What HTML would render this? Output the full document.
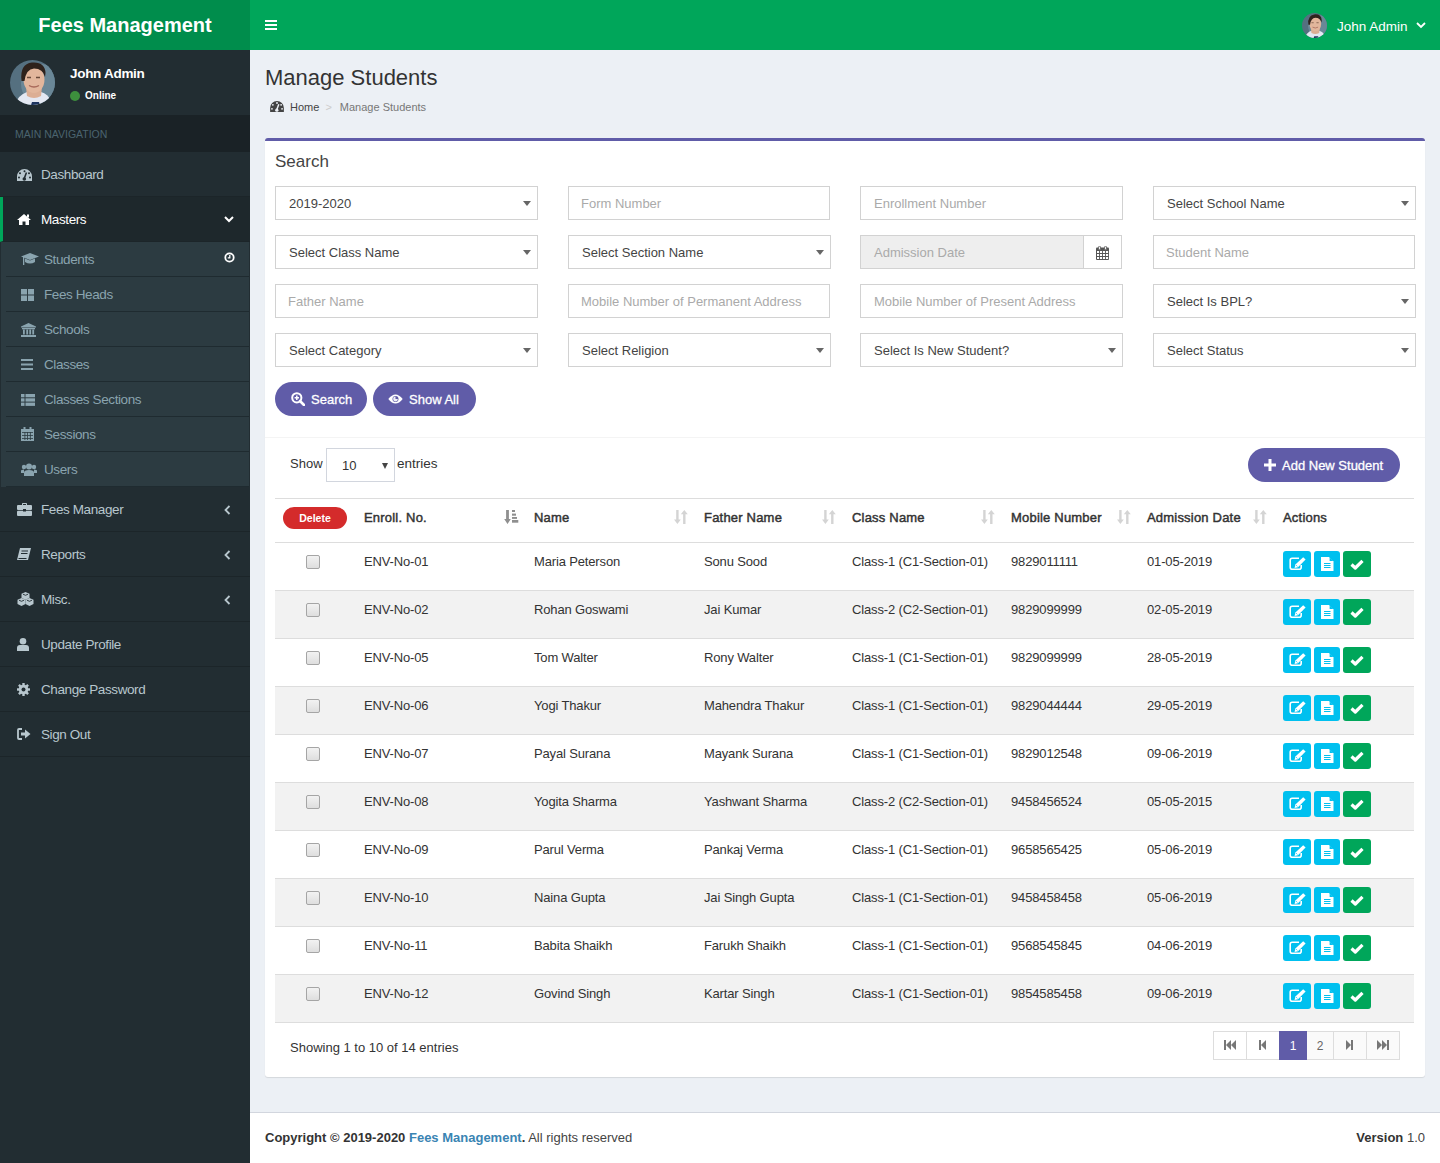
<!DOCTYPE html>
<html><head><meta charset="utf-8"><title>Manage Students</title>
<style>
*{box-sizing:border-box;margin:0;padding:0}
html,body{width:1440px;height:1163px;overflow:hidden}
body{font-family:"Liberation Sans",sans-serif;font-size:13px;color:#333;background:#ecf0f5;position:relative}
.abs{position:absolute}
/* header */
#logo{left:0;top:0;width:250px;height:50px;background:#008d4c;color:#fff;font-weight:bold;font-size:20px;line-height:50px;text-align:center}
#nav{left:250px;top:0;width:1190px;height:50px;background:#00a65a}
.hamb{left:15px;top:20px;width:12px;height:2px;background:#fff;box-shadow:0 4px 0 #fff,0 8px 0 #fff}
/* sidebar */
#side{left:0;top:50px;width:250px;height:1113px;background:#222d32}
.uname{left:70px;top:15px;color:#fff;font-weight:bold;font-size:13.5px;letter-spacing:-0.3px;line-height:18px}
.ustat{left:70px;top:39px;color:#fff;font-size:10px;font-weight:bold;line-height:14px}
.dot{display:inline-block;width:10px;height:10px;border-radius:50%;background:#3d8f3d;margin-right:5px;vertical-align:-2px}
#mh{left:0;top:65px;width:250px;height:37px;background:#1a2226;color:#4b646f;font-size:10.5px;line-height:39px;padding-left:15px}
.mi{position:absolute;left:0;width:250px;height:45px;border-bottom:1px solid #1c2529;color:#b8c7ce;font-size:13.5px;letter-spacing:-0.4px;line-height:46px;padding-left:41px}
.mi svg{position:absolute;left:17px;top:15px}
.mi .chev{position:absolute;left:224px;top:17px}
.mi.act{background:#1e282c;color:#fff;border-left:3px solid #00a65a;padding-left:38px}
.mi.act svg{left:14px}
#tv{left:1px;top:192px;width:248px;height:245px;background:#2c3b41}
.ti{position:absolute;left:0;width:248px;height:35px;color:#8aa4af;font-size:13.5px;letter-spacing:-0.4px;line-height:36px;padding-left:43px}
.ti:after{content:"";position:absolute;left:5px;right:0;bottom:0;height:1px;background:#1f2b30}
.ti svg{position:absolute;left:19px;top:11px}
/* content */
#title{left:265px;top:63px;font-size:22px;color:#333;line-height:30px}
#bc{left:270px;top:99px;font-size:11px;color:#444;line-height:16px}
#box{left:265px;top:138px;width:1160px;height:939px;background:#fff;border-top:3px solid #605ca8;border-radius:3px;box-shadow:0 1px 1px rgba(0,0,0,.1)}
.h3{left:10px;top:10px;font-size:17px;color:#444;line-height:22px}
.fc{position:absolute;height:34px;border:1px solid #d2d2d2;background:#fff;font-size:13px;line-height:34px;padding-left:13px;color:#aaa}
.fc.sel{color:#444}
.fc.sel:after{content:"";position:absolute;right:6px;top:14px;border-left:4px solid transparent;border-right:4px solid transparent;border-top:5px solid #666}
.btnp{position:absolute;height:34px;border-radius:17px;background:#605ca8;color:#fff;font-size:13px;line-height:35px;-webkit-text-stroke:0.3px #fff}
.th{font-size:13px;font-weight:normal;color:#333;letter-spacing:0.2px;line-height:17px;white-space:nowrap;-webkit-text-stroke:0.45px #333}
.td{font-size:13px;color:#333;letter-spacing:-0.15px;line-height:18px;white-space:nowrap}
.cb{width:14px;height:14px;border:1px solid #a5a5a5;border-radius:2px;background:linear-gradient(#f2f2f2,#dedede)}
.bi,.bs{position:absolute;height:26px;border-radius:3px;background:#00c0ef}
.bs{background:#00a65a}
.pgb{height:29px;border:1px solid #ddd;background:#fff;color:#666;font-size:12px;line-height:29px;text-align:center}
.pgb.act{background:#605ca8;border-color:#605ca8;color:#fff;z-index:2}
#foot{left:250px;top:1112px;width:1190px;height:51px;background:#fff;border-top:1px solid #d2d6de;font-size:13px;color:#444;line-height:50px;padding-left:15px}
#foot b{color:#333}
#foot a{color:#3a84b3;text-decoration:none;font-weight:bold}
.uavt{left:1052px;top:13px}
.nname{left:1087px;top:18px;color:#fff;font-size:13.5px;line-height:17px}
table{border-collapse:collapse}
</style></head><body>
<!-- HEADER -->
<div id="logo" class="abs">Fees Management</div>
<div id="nav" class="abs">
  <div class="abs hamb"></div>
  <svg class="abs uavt" width="25" height="25" viewBox="0 0 45 45">
    <defs><clipPath id="cav2"><circle cx="22.5" cy="22.5" r="22.5"/></clipPath></defs>
    <g clip-path="url(#cav2)">
      <rect width="45" height="45" fill="#557080"/>
      <circle cx="31" cy="24" r="20" fill="#6a8797"/>
      <path d="M5 45 Q8 35 17 32 H31 Q38 34 41 41 L40 45Z" fill="#e4e8f2"/>
      <path d="M16 27 H32 L31 36 Q24 40 17 36Z" fill="#dcae94"/>
      <ellipse cx="24" cy="19.5" rx="10.5" ry="13.5" fill="#e2b69c"/>
      <path d="M11.5 21 Q9.5 4 22 2.5 Q35 1.5 35.5 13 L35 17 Q33 8.5 24 8.5 Q16 9 14.5 21Z" fill="#2e221c"/>
      <path d="M17 17.5H21M26 17.5H30" stroke="#6a4a3a" stroke-width="1.3"/>
      <path d="M19 25.5 Q24 28.5 29 25.5" stroke="#a86a5a" stroke-width="1.4" fill="none"/>
      <path d="M22 42 H29 L30 45 H21Z" fill="#1e3560"/>
    </g>
  </svg>
  <div class="abs nname">John Admin</div>
  <svg class="abs" style="left:1166px;top:22px" width="10" height="7" viewBox="0 0 10 7"><path d="M1 1L5 5L9 1" stroke="#fff" stroke-width="1.8" fill="none"/></svg>
</div>
<!-- SIDEBAR -->
<div id="side" class="abs">
  <svg class="abs" style="left:10px;top:10px" width="45" height="45" viewBox="0 0 45 45">
    <defs><clipPath id="cav"><circle cx="22.5" cy="22.5" r="22.5"/></clipPath></defs>
    <g clip-path="url(#cav)">
      <rect width="45" height="45" fill="#557080"/>
      <circle cx="31" cy="24" r="20" fill="#6a8797"/>
      <path d="M5 45 Q8 35 17 32 H31 Q38 34 41 41 L40 45Z" fill="#e4e8f2"/>
      <path d="M16 27 H32 L31 36 Q24 40 17 36Z" fill="#dcae94"/>
      <ellipse cx="24" cy="19.5" rx="10.5" ry="13.5" fill="#e2b69c"/>
      <path d="M11.5 21 Q9.5 4 22 2.5 Q35 1.5 35.5 13 L35 17 Q33 8.5 24 8.5 Q16 9 14.5 21Z" fill="#2e221c"/>
      <path d="M17 17.5H21M26 17.5H30" stroke="#6a4a3a" stroke-width="1.3"/>
      <path d="M19 25.5 Q24 28.5 29 25.5" stroke="#a86a5a" stroke-width="1.4" fill="none"/>
      <path d="M22 42 H29 L30 45 H21Z" fill="#1e3560"/>
    </g>
  </svg>
  <div class="abs uname">John Admin</div>
  <div class="abs ustat"><span class="dot"></span>Online</div>
  <div id="mh" class="abs">MAIN NAVIGATION</div>

  <div class="mi" style="top:102px">
    <svg width="15" height="12" viewBox="0 0 15 12" style="top:17px"><path d="M7.5 0A7.5 7.5 0 0 0 0 7.5V12H15V7.5A7.5 7.5 0 0 0 7.5 0Z" fill="#b8c7ce"/><circle cx="7.5" cy="2.2" r="1" fill="#222d32"/><circle cx="3" cy="4.2" r="1" fill="#222d32"/><circle cx="12" cy="4.2" r="1" fill="#222d32"/><circle cx="2" cy="8.5" r="1" fill="#222d32"/><circle cx="13" cy="8.5" r="1" fill="#222d32"/><path d="M9.5 3.5L7.2 9.5" stroke="#222d32" stroke-width="1.6"/><circle cx="7.3" cy="10" r="1.8" fill="#222d32"/></svg>
    Dashboard</div>
  <div class="mi act" style="top:147px">
    <svg width="14" height="11" viewBox="0 0 14 11" style="top:17px"><path d="M7 0L0 6H2V11H5.5V7.5H8.5V11H12V6H14Z" fill="#fff"/><rect x="10" y="0.5" width="2" height="3" fill="#fff"/></svg>
    Masters
    <svg class="chev" width="10" height="7" viewBox="0 0 10 7" style="left:221px;top:19px"><path d="M1 1L5 5L9 1" stroke="#fff" stroke-width="2" fill="none"/></svg></div>

  <div id="tv" class="abs">
    <div class="ti" style="top:0">
      <svg width="18" height="13" viewBox="0 0 18 13" style="left:20px;top:11px"><path d="M9 0L0 3.5L9 7L18 3.5Z" fill="#8aa4af"/><path d="M4 5.5V9Q9 12 14 9V5.5L9 7.5Z" fill="#8aa4af"/><rect x="2" y="4" width="1.3" height="8" fill="#8aa4af"/></svg>
      Students
      <svg width="11" height="11" viewBox="0 0 11 11" style="left:223px;top:10px"><circle cx="5.5" cy="5.5" r="4.2" stroke="#fff" stroke-width="1.8" fill="none"/><path d="M5.8 3V5.8H3.8" stroke="#fff" stroke-width="1.3" fill="none"/></svg></div>
    <div class="ti" style="top:35px">
      <svg width="13" height="12" viewBox="0 0 13 12" style="left:20px;top:12px"><rect x="0" y="0" width="6" height="5.5" fill="#8aa4af"/><rect x="7" y="0" width="6" height="5.5" fill="#8aa4af"/><rect x="0" y="6.5" width="6" height="5.5" fill="#8aa4af"/><rect x="7" y="6.5" width="6" height="5.5" fill="#8aa4af"/></svg>
      Fees Heads</div>
    <div class="ti" style="top:70px">
      <svg width="15" height="14" viewBox="0 0 15 14" style="left:20px;top:11px"><path d="M7.5 0L0 3.5V4.5H15V3.5Z" fill="#8aa4af"/><rect x="1" y="5" width="13" height="1.3" fill="#8aa4af"/><rect x="2" y="6.5" width="1.8" height="5" fill="#8aa4af"/><rect x="5.3" y="6.5" width="1.8" height="5" fill="#8aa4af"/><rect x="8.3" y="6.5" width="1.8" height="5" fill="#8aa4af"/><rect x="11.3" y="6.5" width="1.8" height="5" fill="#8aa4af"/><rect x="0" y="12" width="15" height="2" fill="#8aa4af"/></svg>
      Schools</div>
    <div class="ti" style="top:105px">
      <svg width="12" height="11" viewBox="0 0 12 11" style="left:20px;top:12px"><rect y="0" width="12" height="2" fill="#8aa4af"/><rect y="4.5" width="12" height="2" fill="#8aa4af"/><rect y="9" width="12" height="2" fill="#8aa4af"/></svg>
      Classes</div>
    <div class="ti" style="top:140px">
      <svg width="14" height="12" viewBox="0 0 14 12" style="left:20px;top:12px"><rect x="0" y="0" width="3.5" height="3.3" fill="#8aa4af"/><rect x="4.5" y="0" width="9.5" height="3.3" fill="#8aa4af"/><rect x="0" y="4.3" width="3.5" height="3.3" fill="#8aa4af"/><rect x="4.5" y="4.3" width="9.5" height="3.3" fill="#8aa4af"/><rect x="0" y="8.6" width="3.5" height="3.3" fill="#8aa4af"/><rect x="4.5" y="8.6" width="9.5" height="3.3" fill="#8aa4af"/></svg>
      Classes Sections</div>
    <div class="ti" style="top:175px">
      <svg width="13" height="14" viewBox="0 0 13 14" style="left:20px;top:10px"><rect x="0" y="2" width="13" height="12" fill="#8aa4af"/><rect x="2.5" y="0" width="2" height="4" fill="#8aa4af"/><rect x="8.5" y="0" width="2" height="4" fill="#8aa4af"/><g fill="#2c3b41"><rect x="1" y="5" width="11" height="0.8"/><rect x="1" y="8" width="11" height="0.8"/><rect x="1" y="11" width="11" height="0.8"/><rect x="3.5" y="5" width="0.8" height="8"/><rect x="6.2" y="5" width="0.8" height="8"/><rect x="8.9" y="5" width="0.8" height="8"/></g></svg>
      Sessions</div>
    <div class="ti" style="top:210px">
      <svg width="16" height="13" viewBox="0 0 16 13" style="left:20px;top:11px"><circle cx="8" cy="3.5" r="3" fill="#8aa4af"/><circle cx="3" cy="4" r="2.2" fill="#8aa4af"/><circle cx="13" cy="4" r="2.2" fill="#8aa4af"/><path d="M3 13V9.5Q3 7 8 7Q13 7 13 9.5V13Z" fill="#8aa4af"/><path d="M0 10V8Q0 6.5 3 6.5V10Z" fill="#8aa4af"/><path d="M16 10V8Q16 6.5 13 6.5V10Z" fill="#8aa4af"/></svg>
      Users</div>
  </div>

  <div class="mi" style="top:437px">
    <svg width="15" height="13" viewBox="0 0 15 13" style="top:16px"><path d="M5 2V0.8Q5 0 5.8 0H9.2Q10 0 10 0.8V2H9V1H6V2Z" fill="#b8c7ce"/><rect x="0" y="2" width="15" height="5" rx="1" fill="#b8c7ce"/><rect x="0" y="7.8" width="15" height="5.2" rx="1" fill="#b8c7ce"/><rect x="6" y="6" width="3" height="2.5" fill="#222d32"/></svg>
    Fees Manager
    <svg class="chev" width="7" height="10" viewBox="0 0 7 10" style="left:224px;top:18px"><path d="M5.5 1L1.5 5L5.5 9" stroke="#b8c7ce" stroke-width="1.8" fill="none"/></svg></div>
  <div class="mi" style="top:482px">
    <svg width="14" height="13" viewBox="0 0 14 13" style="top:16px"><path d="M3 0H14L11 12H0Z" fill="#b8c7ce"/><g stroke="#222d32" stroke-width="1"><path d="M4.5 3H11"/><path d="M4 5.5H10.5"/><path d="M1.5 10.5H9.5"/></g></svg>
    Reports
    <svg class="chev" width="7" height="10" viewBox="0 0 7 10" style="left:224px;top:18px"><path d="M5.5 1L1.5 5L5.5 9" stroke="#b8c7ce" stroke-width="1.8" fill="none"/></svg></div>
  <div class="mi" style="top:527px">
    <svg width="17" height="14" viewBox="0 0 17 14" style="top:15px"><path d="M8.5 0L12.5 1.8V6L8.5 7.8L4.5 6V1.8Z" fill="#b8c7ce"/><path d="M4.5 6L8.5 7.8V12L4.5 14L0.5 12V7.8Z" fill="#b8c7ce"/><path d="M12.5 6L16.5 7.8V12L12.5 14L8.5 12V7.8Z" fill="#b8c7ce"/><path d="M6 2.2L8.5 3.3L11 2.2M2 8.2L4.5 9.3L7 8.2M10 8.2L12.5 9.3L15 8.2" stroke="#222d32" stroke-width="0.9" fill="none"/></svg>
    Misc.
    <svg class="chev" width="7" height="10" viewBox="0 0 7 10" style="left:224px;top:18px"><path d="M5.5 1L1.5 5L5.5 9" stroke="#b8c7ce" stroke-width="1.8" fill="none"/></svg></div>
  <div class="mi" style="top:572px">
    <svg width="12" height="13" viewBox="0 0 12 13" style="top:16px"><circle cx="6" cy="3.3" r="3.3" fill="#b8c7ce"/><path d="M0 13V10Q0 7 3 7H9Q12 7 12 10V13Z" fill="#b8c7ce"/></svg>
    Update Profile</div>
  <div class="mi" style="top:617px">
    <svg width="13" height="13" viewBox="0 0 13 13" style="top:16px"><g fill="#b8c7ce"><circle cx="6.5" cy="6.5" r="4.8"/><rect x="5.3" y="0" width="2.4" height="13"/><rect x="0" y="5.3" width="13" height="2.4"/><rect x="5.3" y="0" width="2.4" height="13" transform="rotate(45 6.5 6.5)"/><rect x="5.3" y="0" width="2.4" height="13" transform="rotate(-45 6.5 6.5)"/></g><circle cx="6.5" cy="6.5" r="2" fill="#222d32"/></svg>
    Change Password</div>
  <div class="mi" style="top:662px">
    <svg width="14" height="12" viewBox="0 0 14 12" style="top:16px"><path d="M5 1H2Q1 1 1 2V10Q1 11 2 11H5" stroke="#b8c7ce" stroke-width="1.8" fill="none"/><path d="M4 4.5H8V1.5L13.5 6L8 10.5V7.5H4Z" fill="#b8c7ce"/></svg>
    Sign Out</div>
</div>

<!-- CONTENT -->
<div id="title" class="abs">Manage Students</div>
<div id="bc" class="abs">
  <svg width="14" height="11" viewBox="0 0 15 12" style="vertical-align:-1px"><path d="M7.5 0A7.5 7.5 0 0 0 0 7.5V12H15V7.5A7.5 7.5 0 0 0 7.5 0Z" fill="#444"/><circle cx="7.5" cy="2.2" r="1" fill="#ecf0f5"/><circle cx="3" cy="4.2" r="1" fill="#ecf0f5"/><circle cx="12" cy="4.2" r="1" fill="#ecf0f5"/><circle cx="2" cy="8.5" r="1" fill="#ecf0f5"/><circle cx="13" cy="8.5" r="1" fill="#ecf0f5"/><path d="M9.5 3.5L7.2 9.5" stroke="#ecf0f5" stroke-width="1.6"/><circle cx="7.3" cy="10" r="1.8" fill="#ecf0f5"/></svg>
  <span style="margin-left:3px">Home</span><span style="color:#ccc;margin:0 8px 0 6px">&gt;</span><span style="color:#777">Manage Students</span>
</div>
<div id="box" class="abs">
  <div class="abs h3">Search</div>
  <!-- row 1 : y abs 186 -> rel 45 -->
  <div class="fc sel" style="left:10px;top:45px;width:263px">2019-2020</div>
  <div class="fc" style="left:303px;top:45px;width:262px;padding-left:12px">Form Number</div>
  <div class="fc" style="left:595px;top:45px;width:263px">Enrollment Number</div>
  <div class="fc sel" style="left:888px;top:45px;width:263px">Select School Name</div>
  <!-- row 2 -->
  <div class="fc sel" style="left:10px;top:94px;width:263px">Select Class Name</div>
  <div class="fc sel" style="left:303px;top:94px;width:263px">Select Section Name</div>
  <div class="fc" style="left:595px;top:94px;width:224px;background:#eee">Admission Date</div>
  <div class="fc" style="left:818px;top:94px;width:39px;padding:0">
    <svg width="13" height="14" viewBox="0 0 13 14" style="position:absolute;left:12px;top:10px"><rect x="0" y="1.5" width="13" height="12.5" rx="1" fill="#555"/><g fill="#fff"><rect x="1" y="5" width="2.1" height="2"/><rect x="4" y="5" width="2.1" height="2"/><rect x="7" y="5" width="2.1" height="2"/><rect x="10" y="5" width="2.1" height="2"/><rect x="1" y="8" width="2.1" height="2"/><rect x="4" y="8" width="2.1" height="2"/><rect x="7" y="8" width="2.1" height="2"/><rect x="10" y="8" width="2.1" height="2"/><rect x="1" y="11" width="2.1" height="2"/><rect x="4" y="11" width="2.1" height="2"/><rect x="7" y="11" width="2.1" height="2"/><rect x="10" y="11" width="2.1" height="2"/></g><rect x="2.6" y="0.2" width="1.9" height="3.6" rx="0.9" fill="#fff" stroke="#555" stroke-width="0.8"/><rect x="8.6" y="0.2" width="1.9" height="3.6" rx="0.9" fill="#fff" stroke="#555" stroke-width="0.8"/></svg>
  </div>
  <div class="fc" style="left:888px;top:94px;width:262px;padding-left:12px">Student Name</div>
  <!-- row 3 -->
  <div class="fc" style="left:10px;top:143px;width:263px;padding-left:12px">Father Name</div>
  <div class="fc" style="left:303px;top:143px;width:262px;padding-left:12px">Mobile Number of Permanent Address</div>
  <div class="fc" style="left:595px;top:143px;width:263px">Mobile Number of Present Address</div>
  <div class="fc sel" style="left:888px;top:143px;width:263px">Select Is BPL?</div>
  <!-- row 4 -->
  <div class="fc sel" style="left:10px;top:192px;width:263px">Select Category</div>
  <div class="fc sel" style="left:303px;top:192px;width:263px">Select Religion</div>
  <div class="fc sel" style="left:595px;top:192px;width:263px">Select Is New Student?</div>
  <div class="fc sel" style="left:888px;top:192px;width:263px">Select Status</div>
  <!-- buttons -->
  <div class="btnp" style="left:10px;top:241px;width:92px;padding-left:36px">
    <svg width="14" height="14" viewBox="0 0 14 14" style="position:absolute;left:16px;top:10px"><circle cx="5.8" cy="5.8" r="4.6" stroke="#fff" stroke-width="2" fill="none"/><path d="M9 9L13 13" stroke="#fff" stroke-width="2.6" stroke-linecap="round"/><path d="M5.8 3.6V8M3.6 5.8H8" stroke="#fff" stroke-width="1.5"/></svg>Search</div>
  <div class="btnp" style="left:108px;top:241px;width:103px;padding-left:36px">
    <svg width="15" height="10" viewBox="0 0 15 10" style="position:absolute;left:15px;top:12px"><path d="M0.3 5Q7.5 -4 14.7 5Q7.5 14 0.3 5Z" fill="#fff"/><circle cx="7.5" cy="5" r="3" fill="#605ca8"/><path d="M7.5 2.6A2.4 2.4 0 1 0 9.9 5H7.5Z" fill="#fff" opacity="0.9"/></svg>Show All</div>

  <!-- separator -->
  <div class="abs" style="left:0;top:296px;width:1160px;height:1px;background:#f4f4f4"></div>

  <!-- datatable top -->
  <div class="abs" style="left:25px;top:315px;font-size:13px;color:#333;line-height:16px">Show</div>
  <div class="abs" style="left:61px;top:307px;width:69px;height:34px;border:1px solid #d2d6de;font-size:13px;line-height:34px;padding-left:15px;color:#333">10
    <div class="abs" style="left:55px;top:14px;border-left:3.5px solid transparent;border-right:3.5px solid transparent;border-top:6px solid #444"></div></div>
  <div class="abs" style="left:132px;top:315px;font-size:13.5px;color:#333;line-height:16px">entries</div>
  <div class="btnp" style="left:983px;top:307px;width:152px;padding-left:34px">
    <svg width="12" height="12" viewBox="0 0 12 12" style="position:absolute;left:16px;top:11px"><path d="M4.5 0H7.5V4.5H12V7.5H7.5V12H4.5V7.5H0V4.5H4.5Z" fill="#fff"/></svg>Add New Student</div>
<!--TABLE-->
<div class="abs" style="left:10px;top:357px;width:1139px;height:1px;background:#ddd"></div>
<div class="abs" style="left:18px;top:366px;width:64px;height:22px;border-radius:11px;background:#d42b2b;color:#fff;font-size:10.5px;font-weight:bold;line-height:23px;text-align:center">Delete</div>
<div class="abs th" style="left:99px;top:368px">Enroll. No.</div>
<div class="abs" style="left:239px;top:369px;width:15px;height:14px;line-height:0"><svg width="15" height="14" viewBox="0 0 15 14"><path d="M2.1 0H4.9V9H6.8L3.5 14L0.2 9H2.1Z" fill="#8f8f8f"/><rect x="8" y="0" width="3" height="2" fill="#8f8f8f"/><rect x="8" y="3.6" width="4" height="2.1" fill="#8f8f8f"/><rect x="8" y="7" width="5" height="1.9" fill="#8f8f8f"/><rect x="8" y="10" width="6.3" height="2.7" fill="#8f8f8f"/></svg></div>
<div class="abs th" style="left:269px;top:368px">Name</div>
<div class="abs" style="left:409px;top:369px;width:15px;height:14px;line-height:0"><svg width="15" height="14" viewBox="0 0 15 14"><path d="M2.2 0H4.6V9.5H6.8L3.4 14L0 9.5H2.2Z" fill="#d4d4d4"/><path d="M9.1 14H11.5V4.2H13.8L10.3 0L6.8 4.2H9.1Z" fill="#d4d4d4"/></svg></div>
<div class="abs th" style="left:439px;top:368px">Father Name</div>
<div class="abs" style="left:557px;top:369px;width:15px;height:14px;line-height:0"><svg width="15" height="14" viewBox="0 0 15 14"><path d="M2.2 0H4.6V9.5H6.8L3.4 14L0 9.5H2.2Z" fill="#d4d4d4"/><path d="M9.1 14H11.5V4.2H13.8L10.3 0L6.8 4.2H9.1Z" fill="#d4d4d4"/></svg></div>
<div class="abs th" style="left:587px;top:368px">Class Name</div>
<div class="abs" style="left:716px;top:369px;width:15px;height:14px;line-height:0"><svg width="15" height="14" viewBox="0 0 15 14"><path d="M2.2 0H4.6V9.5H6.8L3.4 14L0 9.5H2.2Z" fill="#d4d4d4"/><path d="M9.1 14H11.5V4.2H13.8L10.3 0L6.8 4.2H9.1Z" fill="#d4d4d4"/></svg></div>
<div class="abs th" style="left:746px;top:368px">Mobile Number</div>
<div class="abs" style="left:852px;top:369px;width:15px;height:14px;line-height:0"><svg width="15" height="14" viewBox="0 0 15 14"><path d="M2.2 0H4.6V9.5H6.8L3.4 14L0 9.5H2.2Z" fill="#d4d4d4"/><path d="M9.1 14H11.5V4.2H13.8L10.3 0L6.8 4.2H9.1Z" fill="#d4d4d4"/></svg></div>
<div class="abs th" style="left:882px;top:368px">Admission Date</div>
<div class="abs" style="left:988px;top:369px;width:15px;height:14px;line-height:0"><svg width="15" height="14" viewBox="0 0 15 14"><path d="M2.2 0H4.6V9.5H6.8L3.4 14L0 9.5H2.2Z" fill="#d4d4d4"/><path d="M9.1 14H11.5V4.2H13.8L10.3 0L6.8 4.2H9.1Z" fill="#d4d4d4"/></svg></div>
<div class="abs th" style="left:1018px;top:368px">Actions</div>
<div class="abs" style="left:10px;top:401px;width:1139px;height:1px;background:#ddd"></div>
<div class="abs" style="left:10px;top:402px;width:1139px;height:47px;background:#fff"></div>
<div class="abs" style="left:10px;top:449px;width:1139px;height:1px;background:#ddd"></div>
<div class="abs cb" style="left:41px;top:414px"></div>
<div class="abs td" style="left:99px;top:412px">ENV-No-01</div>
<div class="abs td" style="left:269px;top:412px">Maria Peterson</div>
<div class="abs td" style="left:439px;top:412px">Sonu Sood</div>
<div class="abs td" style="left:587px;top:412px">Class-1 (C1-Section-01)</div>
<div class="abs td" style="left:746px;top:412px">9829011111</div>
<div class="abs td" style="left:882px;top:412px">01-05-2019</div>
<div class="abs bi" style="left:1018px;top:410px;width:28px"><svg width="17" height="14" viewBox="0 0 17 14" style="position:absolute;left:6px;top:6px"><path d="M10 1.2H3.2Q1.2 1.2 1.2 3.2V10.3Q1.2 12.3 3.2 12.3H10.2Q12.2 12.3 12.2 10.3V8" stroke="#fff" stroke-width="1.6" fill="none"/><path d="M14.2 0.2L16.6 2.6L9 10.2L5.6 11L6.4 7.6Z" fill="#fff"/><path d="M7.2 8.2L8.4 9.4" stroke="#00c0ef" stroke-width="0.8"/></svg></div>
<div class="abs bi" style="left:1049px;top:410px;width:26px"><svg width="13" height="14" viewBox="0 0 13 14" style="position:absolute;left:7px;top:6px"><path d="M0 0H8L12.5 4.5V14H0Z" fill="#fff"/><path d="M8.6 0.2V4H12.3Z" fill="#00c0ef"/><rect x="3" y="6" width="6.5" height="1" fill="#00c0ef"/><rect x="3" y="8" width="6.5" height="1" fill="#00c0ef"/><rect x="3" y="10" width="6.5" height="1" fill="#00c0ef"/></svg></div>
<div class="abs bs" style="left:1078px;top:410px;width:28px"><svg width="14" height="11" viewBox="0 0 14 11" style="position:absolute;left:7px;top:8px"><path d="M1.5 5.5L5.3 9L12.5 1.8" stroke="#fff" stroke-width="3.2" fill="none" stroke-linejoin="round"/></svg></div>
<div class="abs" style="left:10px;top:450px;width:1139px;height:47px;background:#f2f2f2"></div>
<div class="abs" style="left:10px;top:497px;width:1139px;height:1px;background:#ddd"></div>
<div class="abs cb" style="left:41px;top:462px"></div>
<div class="abs td" style="left:99px;top:460px">ENV-No-02</div>
<div class="abs td" style="left:269px;top:460px">Rohan Goswami</div>
<div class="abs td" style="left:439px;top:460px">Jai Kumar</div>
<div class="abs td" style="left:587px;top:460px">Class-2 (C2-Section-01)</div>
<div class="abs td" style="left:746px;top:460px">9829099999</div>
<div class="abs td" style="left:882px;top:460px">02-05-2019</div>
<div class="abs bi" style="left:1018px;top:458px;width:28px"><svg width="17" height="14" viewBox="0 0 17 14" style="position:absolute;left:6px;top:6px"><path d="M10 1.2H3.2Q1.2 1.2 1.2 3.2V10.3Q1.2 12.3 3.2 12.3H10.2Q12.2 12.3 12.2 10.3V8" stroke="#fff" stroke-width="1.6" fill="none"/><path d="M14.2 0.2L16.6 2.6L9 10.2L5.6 11L6.4 7.6Z" fill="#fff"/><path d="M7.2 8.2L8.4 9.4" stroke="#00c0ef" stroke-width="0.8"/></svg></div>
<div class="abs bi" style="left:1049px;top:458px;width:26px"><svg width="13" height="14" viewBox="0 0 13 14" style="position:absolute;left:7px;top:6px"><path d="M0 0H8L12.5 4.5V14H0Z" fill="#fff"/><path d="M8.6 0.2V4H12.3Z" fill="#00c0ef"/><rect x="3" y="6" width="6.5" height="1" fill="#00c0ef"/><rect x="3" y="8" width="6.5" height="1" fill="#00c0ef"/><rect x="3" y="10" width="6.5" height="1" fill="#00c0ef"/></svg></div>
<div class="abs bs" style="left:1078px;top:458px;width:28px"><svg width="14" height="11" viewBox="0 0 14 11" style="position:absolute;left:7px;top:8px"><path d="M1.5 5.5L5.3 9L12.5 1.8" stroke="#fff" stroke-width="3.2" fill="none" stroke-linejoin="round"/></svg></div>
<div class="abs" style="left:10px;top:498px;width:1139px;height:47px;background:#fff"></div>
<div class="abs" style="left:10px;top:545px;width:1139px;height:1px;background:#ddd"></div>
<div class="abs cb" style="left:41px;top:510px"></div>
<div class="abs td" style="left:99px;top:508px">ENV-No-05</div>
<div class="abs td" style="left:269px;top:508px">Tom Walter</div>
<div class="abs td" style="left:439px;top:508px">Rony Walter</div>
<div class="abs td" style="left:587px;top:508px">Class-1 (C1-Section-01)</div>
<div class="abs td" style="left:746px;top:508px">9829099999</div>
<div class="abs td" style="left:882px;top:508px">28-05-2019</div>
<div class="abs bi" style="left:1018px;top:506px;width:28px"><svg width="17" height="14" viewBox="0 0 17 14" style="position:absolute;left:6px;top:6px"><path d="M10 1.2H3.2Q1.2 1.2 1.2 3.2V10.3Q1.2 12.3 3.2 12.3H10.2Q12.2 12.3 12.2 10.3V8" stroke="#fff" stroke-width="1.6" fill="none"/><path d="M14.2 0.2L16.6 2.6L9 10.2L5.6 11L6.4 7.6Z" fill="#fff"/><path d="M7.2 8.2L8.4 9.4" stroke="#00c0ef" stroke-width="0.8"/></svg></div>
<div class="abs bi" style="left:1049px;top:506px;width:26px"><svg width="13" height="14" viewBox="0 0 13 14" style="position:absolute;left:7px;top:6px"><path d="M0 0H8L12.5 4.5V14H0Z" fill="#fff"/><path d="M8.6 0.2V4H12.3Z" fill="#00c0ef"/><rect x="3" y="6" width="6.5" height="1" fill="#00c0ef"/><rect x="3" y="8" width="6.5" height="1" fill="#00c0ef"/><rect x="3" y="10" width="6.5" height="1" fill="#00c0ef"/></svg></div>
<div class="abs bs" style="left:1078px;top:506px;width:28px"><svg width="14" height="11" viewBox="0 0 14 11" style="position:absolute;left:7px;top:8px"><path d="M1.5 5.5L5.3 9L12.5 1.8" stroke="#fff" stroke-width="3.2" fill="none" stroke-linejoin="round"/></svg></div>
<div class="abs" style="left:10px;top:546px;width:1139px;height:47px;background:#f2f2f2"></div>
<div class="abs" style="left:10px;top:593px;width:1139px;height:1px;background:#ddd"></div>
<div class="abs cb" style="left:41px;top:558px"></div>
<div class="abs td" style="left:99px;top:556px">ENV-No-06</div>
<div class="abs td" style="left:269px;top:556px">Yogi Thakur</div>
<div class="abs td" style="left:439px;top:556px">Mahendra Thakur</div>
<div class="abs td" style="left:587px;top:556px">Class-1 (C1-Section-01)</div>
<div class="abs td" style="left:746px;top:556px">9829044444</div>
<div class="abs td" style="left:882px;top:556px">29-05-2019</div>
<div class="abs bi" style="left:1018px;top:554px;width:28px"><svg width="17" height="14" viewBox="0 0 17 14" style="position:absolute;left:6px;top:6px"><path d="M10 1.2H3.2Q1.2 1.2 1.2 3.2V10.3Q1.2 12.3 3.2 12.3H10.2Q12.2 12.3 12.2 10.3V8" stroke="#fff" stroke-width="1.6" fill="none"/><path d="M14.2 0.2L16.6 2.6L9 10.2L5.6 11L6.4 7.6Z" fill="#fff"/><path d="M7.2 8.2L8.4 9.4" stroke="#00c0ef" stroke-width="0.8"/></svg></div>
<div class="abs bi" style="left:1049px;top:554px;width:26px"><svg width="13" height="14" viewBox="0 0 13 14" style="position:absolute;left:7px;top:6px"><path d="M0 0H8L12.5 4.5V14H0Z" fill="#fff"/><path d="M8.6 0.2V4H12.3Z" fill="#00c0ef"/><rect x="3" y="6" width="6.5" height="1" fill="#00c0ef"/><rect x="3" y="8" width="6.5" height="1" fill="#00c0ef"/><rect x="3" y="10" width="6.5" height="1" fill="#00c0ef"/></svg></div>
<div class="abs bs" style="left:1078px;top:554px;width:28px"><svg width="14" height="11" viewBox="0 0 14 11" style="position:absolute;left:7px;top:8px"><path d="M1.5 5.5L5.3 9L12.5 1.8" stroke="#fff" stroke-width="3.2" fill="none" stroke-linejoin="round"/></svg></div>
<div class="abs" style="left:10px;top:594px;width:1139px;height:47px;background:#fff"></div>
<div class="abs" style="left:10px;top:641px;width:1139px;height:1px;background:#ddd"></div>
<div class="abs cb" style="left:41px;top:606px"></div>
<div class="abs td" style="left:99px;top:604px">ENV-No-07</div>
<div class="abs td" style="left:269px;top:604px">Payal Surana</div>
<div class="abs td" style="left:439px;top:604px">Mayank Surana</div>
<div class="abs td" style="left:587px;top:604px">Class-1 (C1-Section-01)</div>
<div class="abs td" style="left:746px;top:604px">9829012548</div>
<div class="abs td" style="left:882px;top:604px">09-06-2019</div>
<div class="abs bi" style="left:1018px;top:602px;width:28px"><svg width="17" height="14" viewBox="0 0 17 14" style="position:absolute;left:6px;top:6px"><path d="M10 1.2H3.2Q1.2 1.2 1.2 3.2V10.3Q1.2 12.3 3.2 12.3H10.2Q12.2 12.3 12.2 10.3V8" stroke="#fff" stroke-width="1.6" fill="none"/><path d="M14.2 0.2L16.6 2.6L9 10.2L5.6 11L6.4 7.6Z" fill="#fff"/><path d="M7.2 8.2L8.4 9.4" stroke="#00c0ef" stroke-width="0.8"/></svg></div>
<div class="abs bi" style="left:1049px;top:602px;width:26px"><svg width="13" height="14" viewBox="0 0 13 14" style="position:absolute;left:7px;top:6px"><path d="M0 0H8L12.5 4.5V14H0Z" fill="#fff"/><path d="M8.6 0.2V4H12.3Z" fill="#00c0ef"/><rect x="3" y="6" width="6.5" height="1" fill="#00c0ef"/><rect x="3" y="8" width="6.5" height="1" fill="#00c0ef"/><rect x="3" y="10" width="6.5" height="1" fill="#00c0ef"/></svg></div>
<div class="abs bs" style="left:1078px;top:602px;width:28px"><svg width="14" height="11" viewBox="0 0 14 11" style="position:absolute;left:7px;top:8px"><path d="M1.5 5.5L5.3 9L12.5 1.8" stroke="#fff" stroke-width="3.2" fill="none" stroke-linejoin="round"/></svg></div>
<div class="abs" style="left:10px;top:642px;width:1139px;height:47px;background:#f2f2f2"></div>
<div class="abs" style="left:10px;top:689px;width:1139px;height:1px;background:#ddd"></div>
<div class="abs cb" style="left:41px;top:654px"></div>
<div class="abs td" style="left:99px;top:652px">ENV-No-08</div>
<div class="abs td" style="left:269px;top:652px">Yogita Sharma</div>
<div class="abs td" style="left:439px;top:652px">Yashwant Sharma</div>
<div class="abs td" style="left:587px;top:652px">Class-2 (C2-Section-01)</div>
<div class="abs td" style="left:746px;top:652px">9458456524</div>
<div class="abs td" style="left:882px;top:652px">05-05-2015</div>
<div class="abs bi" style="left:1018px;top:650px;width:28px"><svg width="17" height="14" viewBox="0 0 17 14" style="position:absolute;left:6px;top:6px"><path d="M10 1.2H3.2Q1.2 1.2 1.2 3.2V10.3Q1.2 12.3 3.2 12.3H10.2Q12.2 12.3 12.2 10.3V8" stroke="#fff" stroke-width="1.6" fill="none"/><path d="M14.2 0.2L16.6 2.6L9 10.2L5.6 11L6.4 7.6Z" fill="#fff"/><path d="M7.2 8.2L8.4 9.4" stroke="#00c0ef" stroke-width="0.8"/></svg></div>
<div class="abs bi" style="left:1049px;top:650px;width:26px"><svg width="13" height="14" viewBox="0 0 13 14" style="position:absolute;left:7px;top:6px"><path d="M0 0H8L12.5 4.5V14H0Z" fill="#fff"/><path d="M8.6 0.2V4H12.3Z" fill="#00c0ef"/><rect x="3" y="6" width="6.5" height="1" fill="#00c0ef"/><rect x="3" y="8" width="6.5" height="1" fill="#00c0ef"/><rect x="3" y="10" width="6.5" height="1" fill="#00c0ef"/></svg></div>
<div class="abs bs" style="left:1078px;top:650px;width:28px"><svg width="14" height="11" viewBox="0 0 14 11" style="position:absolute;left:7px;top:8px"><path d="M1.5 5.5L5.3 9L12.5 1.8" stroke="#fff" stroke-width="3.2" fill="none" stroke-linejoin="round"/></svg></div>
<div class="abs" style="left:10px;top:690px;width:1139px;height:47px;background:#fff"></div>
<div class="abs" style="left:10px;top:737px;width:1139px;height:1px;background:#ddd"></div>
<div class="abs cb" style="left:41px;top:702px"></div>
<div class="abs td" style="left:99px;top:700px">ENV-No-09</div>
<div class="abs td" style="left:269px;top:700px">Parul Verma</div>
<div class="abs td" style="left:439px;top:700px">Pankaj Verma</div>
<div class="abs td" style="left:587px;top:700px">Class-1 (C1-Section-01)</div>
<div class="abs td" style="left:746px;top:700px">9658565425</div>
<div class="abs td" style="left:882px;top:700px">05-06-2019</div>
<div class="abs bi" style="left:1018px;top:698px;width:28px"><svg width="17" height="14" viewBox="0 0 17 14" style="position:absolute;left:6px;top:6px"><path d="M10 1.2H3.2Q1.2 1.2 1.2 3.2V10.3Q1.2 12.3 3.2 12.3H10.2Q12.2 12.3 12.2 10.3V8" stroke="#fff" stroke-width="1.6" fill="none"/><path d="M14.2 0.2L16.6 2.6L9 10.2L5.6 11L6.4 7.6Z" fill="#fff"/><path d="M7.2 8.2L8.4 9.4" stroke="#00c0ef" stroke-width="0.8"/></svg></div>
<div class="abs bi" style="left:1049px;top:698px;width:26px"><svg width="13" height="14" viewBox="0 0 13 14" style="position:absolute;left:7px;top:6px"><path d="M0 0H8L12.5 4.5V14H0Z" fill="#fff"/><path d="M8.6 0.2V4H12.3Z" fill="#00c0ef"/><rect x="3" y="6" width="6.5" height="1" fill="#00c0ef"/><rect x="3" y="8" width="6.5" height="1" fill="#00c0ef"/><rect x="3" y="10" width="6.5" height="1" fill="#00c0ef"/></svg></div>
<div class="abs bs" style="left:1078px;top:698px;width:28px"><svg width="14" height="11" viewBox="0 0 14 11" style="position:absolute;left:7px;top:8px"><path d="M1.5 5.5L5.3 9L12.5 1.8" stroke="#fff" stroke-width="3.2" fill="none" stroke-linejoin="round"/></svg></div>
<div class="abs" style="left:10px;top:738px;width:1139px;height:47px;background:#f2f2f2"></div>
<div class="abs" style="left:10px;top:785px;width:1139px;height:1px;background:#ddd"></div>
<div class="abs cb" style="left:41px;top:750px"></div>
<div class="abs td" style="left:99px;top:748px">ENV-No-10</div>
<div class="abs td" style="left:269px;top:748px">Naina Gupta</div>
<div class="abs td" style="left:439px;top:748px">Jai Singh Gupta</div>
<div class="abs td" style="left:587px;top:748px">Class-1 (C1-Section-01)</div>
<div class="abs td" style="left:746px;top:748px">9458458458</div>
<div class="abs td" style="left:882px;top:748px">05-06-2019</div>
<div class="abs bi" style="left:1018px;top:746px;width:28px"><svg width="17" height="14" viewBox="0 0 17 14" style="position:absolute;left:6px;top:6px"><path d="M10 1.2H3.2Q1.2 1.2 1.2 3.2V10.3Q1.2 12.3 3.2 12.3H10.2Q12.2 12.3 12.2 10.3V8" stroke="#fff" stroke-width="1.6" fill="none"/><path d="M14.2 0.2L16.6 2.6L9 10.2L5.6 11L6.4 7.6Z" fill="#fff"/><path d="M7.2 8.2L8.4 9.4" stroke="#00c0ef" stroke-width="0.8"/></svg></div>
<div class="abs bi" style="left:1049px;top:746px;width:26px"><svg width="13" height="14" viewBox="0 0 13 14" style="position:absolute;left:7px;top:6px"><path d="M0 0H8L12.5 4.5V14H0Z" fill="#fff"/><path d="M8.6 0.2V4H12.3Z" fill="#00c0ef"/><rect x="3" y="6" width="6.5" height="1" fill="#00c0ef"/><rect x="3" y="8" width="6.5" height="1" fill="#00c0ef"/><rect x="3" y="10" width="6.5" height="1" fill="#00c0ef"/></svg></div>
<div class="abs bs" style="left:1078px;top:746px;width:28px"><svg width="14" height="11" viewBox="0 0 14 11" style="position:absolute;left:7px;top:8px"><path d="M1.5 5.5L5.3 9L12.5 1.8" stroke="#fff" stroke-width="3.2" fill="none" stroke-linejoin="round"/></svg></div>
<div class="abs" style="left:10px;top:786px;width:1139px;height:47px;background:#fff"></div>
<div class="abs" style="left:10px;top:833px;width:1139px;height:1px;background:#ddd"></div>
<div class="abs cb" style="left:41px;top:798px"></div>
<div class="abs td" style="left:99px;top:796px">ENV-No-11</div>
<div class="abs td" style="left:269px;top:796px">Babita Shaikh</div>
<div class="abs td" style="left:439px;top:796px">Farukh Shaikh</div>
<div class="abs td" style="left:587px;top:796px">Class-1 (C1-Section-01)</div>
<div class="abs td" style="left:746px;top:796px">9568545845</div>
<div class="abs td" style="left:882px;top:796px">04-06-2019</div>
<div class="abs bi" style="left:1018px;top:794px;width:28px"><svg width="17" height="14" viewBox="0 0 17 14" style="position:absolute;left:6px;top:6px"><path d="M10 1.2H3.2Q1.2 1.2 1.2 3.2V10.3Q1.2 12.3 3.2 12.3H10.2Q12.2 12.3 12.2 10.3V8" stroke="#fff" stroke-width="1.6" fill="none"/><path d="M14.2 0.2L16.6 2.6L9 10.2L5.6 11L6.4 7.6Z" fill="#fff"/><path d="M7.2 8.2L8.4 9.4" stroke="#00c0ef" stroke-width="0.8"/></svg></div>
<div class="abs bi" style="left:1049px;top:794px;width:26px"><svg width="13" height="14" viewBox="0 0 13 14" style="position:absolute;left:7px;top:6px"><path d="M0 0H8L12.5 4.5V14H0Z" fill="#fff"/><path d="M8.6 0.2V4H12.3Z" fill="#00c0ef"/><rect x="3" y="6" width="6.5" height="1" fill="#00c0ef"/><rect x="3" y="8" width="6.5" height="1" fill="#00c0ef"/><rect x="3" y="10" width="6.5" height="1" fill="#00c0ef"/></svg></div>
<div class="abs bs" style="left:1078px;top:794px;width:28px"><svg width="14" height="11" viewBox="0 0 14 11" style="position:absolute;left:7px;top:8px"><path d="M1.5 5.5L5.3 9L12.5 1.8" stroke="#fff" stroke-width="3.2" fill="none" stroke-linejoin="round"/></svg></div>
<div class="abs" style="left:10px;top:834px;width:1139px;height:47px;background:#f2f2f2"></div>
<div class="abs" style="left:10px;top:881px;width:1139px;height:1px;background:#ddd"></div>
<div class="abs cb" style="left:41px;top:846px"></div>
<div class="abs td" style="left:99px;top:844px">ENV-No-12</div>
<div class="abs td" style="left:269px;top:844px">Govind Singh</div>
<div class="abs td" style="left:439px;top:844px">Kartar Singh</div>
<div class="abs td" style="left:587px;top:844px">Class-1 (C1-Section-01)</div>
<div class="abs td" style="left:746px;top:844px">9854585458</div>
<div class="abs td" style="left:882px;top:844px">09-06-2019</div>
<div class="abs bi" style="left:1018px;top:842px;width:28px"><svg width="17" height="14" viewBox="0 0 17 14" style="position:absolute;left:6px;top:6px"><path d="M10 1.2H3.2Q1.2 1.2 1.2 3.2V10.3Q1.2 12.3 3.2 12.3H10.2Q12.2 12.3 12.2 10.3V8" stroke="#fff" stroke-width="1.6" fill="none"/><path d="M14.2 0.2L16.6 2.6L9 10.2L5.6 11L6.4 7.6Z" fill="#fff"/><path d="M7.2 8.2L8.4 9.4" stroke="#00c0ef" stroke-width="0.8"/></svg></div>
<div class="abs bi" style="left:1049px;top:842px;width:26px"><svg width="13" height="14" viewBox="0 0 13 14" style="position:absolute;left:7px;top:6px"><path d="M0 0H8L12.5 4.5V14H0Z" fill="#fff"/><path d="M8.6 0.2V4H12.3Z" fill="#00c0ef"/><rect x="3" y="6" width="6.5" height="1" fill="#00c0ef"/><rect x="3" y="8" width="6.5" height="1" fill="#00c0ef"/><rect x="3" y="10" width="6.5" height="1" fill="#00c0ef"/></svg></div>
<div class="abs bs" style="left:1078px;top:842px;width:28px"><svg width="14" height="11" viewBox="0 0 14 11" style="position:absolute;left:7px;top:8px"><path d="M1.5 5.5L5.3 9L12.5 1.8" stroke="#fff" stroke-width="3.2" fill="none" stroke-linejoin="round"/></svg></div>
<div class="abs td" style="left:25px;top:898px;letter-spacing:0">Showing 1 to 10 of 14 entries</div>
<div class="abs pgb" style="left:948px;top:890px;width:34px"><svg width="12" height="10" viewBox="0 0 12 10" style="position:absolute;left:10px;top:8px" fill="#777"><path d="M0 0H2V10H0Z"/><path d="M2 5L7 0V10Z"/><path d="M7 5L12 0V10Z"/></svg></div>
<div class="abs pgb" style="left:981px;top:890px;width:34px"><svg width="7" height="10" viewBox="0 0 7 10" style="position:absolute;left:12px;top:8px" fill="#777"><path d="M0 0H2V10H0Z"/><path d="M2 5L7 0V10Z"/></svg></div>
<div class="abs pgb act" style="left:1014px;top:890px;width:28px">1</div>
<div class="abs pgb" style="left:1041px;top:890px;width:28px;background:#fafafa">2</div>
<div class="abs pgb" style="left:1068px;top:890px;width:34px;background:#fafafa"><svg width="7" height="10" viewBox="0 0 7 10" style="position:absolute;left:12px;top:8px" fill="#777"><path d="M0 0L5 5L0 10Z"/><path d="M5 0H7V10H5Z"/></svg></div>
<div class="abs pgb" style="left:1101px;top:890px;width:34px;background:#fafafa"><svg width="12" height="10" viewBox="0 0 12 10" style="position:absolute;left:10px;top:8px" fill="#777"><path d="M0 0L5 5L0 10Z"/><path d="M5 0L10 5L5 10Z"/><path d="M10 0H12V10H10Z"/></svg></div>
<!--/TABLE-->
</div>
<div id="foot" class="abs"><b>Copyright &copy; 2019-2020 <a>Fees Management</a>.</b> All rights reserved<span style="position:absolute;right:15px;top:0"><b>Version</b> 1.0</span></div>

</body></html>
